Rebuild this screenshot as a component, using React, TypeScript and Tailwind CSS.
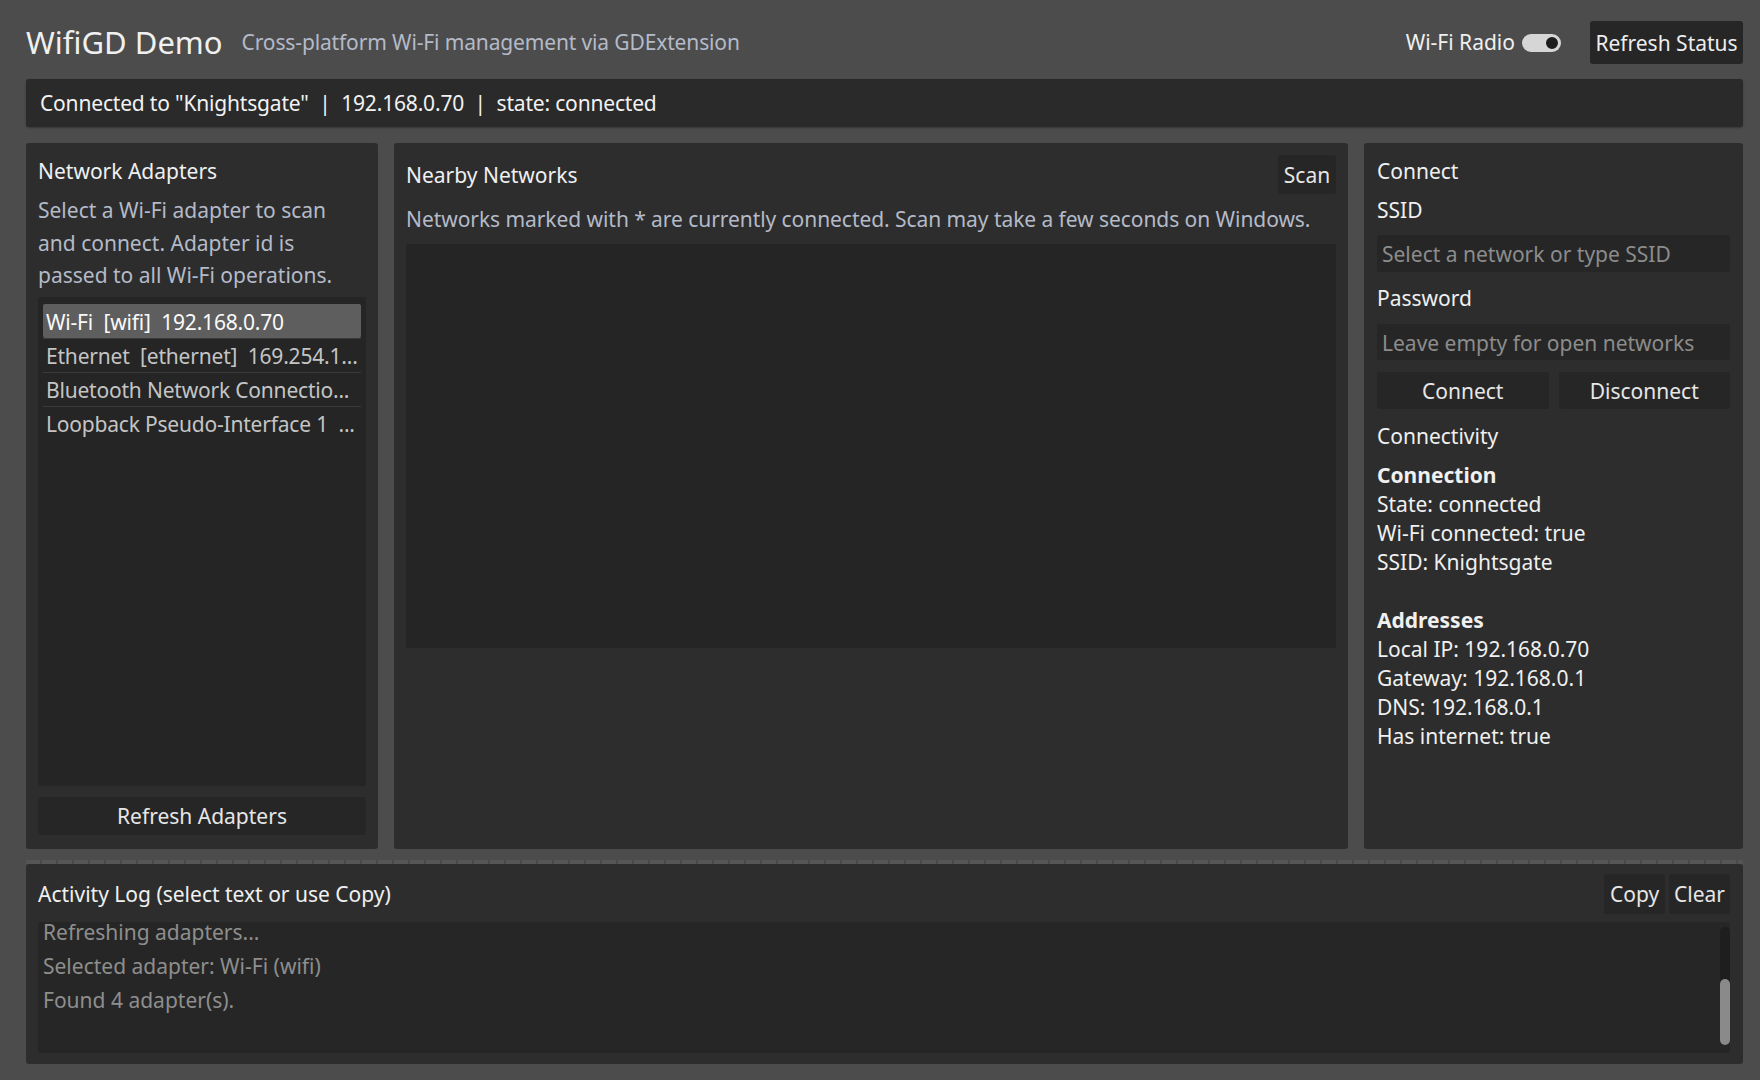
import clsx from "clsx";

const adapters = [
  "Wi-Fi  [wifi]  192.168.0.70",
  "Ethernet  [ethernet]  169.254.1...",
  "Bluetooth Network Connectio...",
  "Loopback Pseudo-Interface 1  ...",
];

const logLines = ["Refreshing adapters...", "Selected adapter: Wi-Fi (wifi)", "Found 4 adapter(s)."];

function Btn({ children, className }: { children: React.ReactNode; className?: string }) {
  return (
    <button
      className={clsx(
        "rounded-[3px] bg-[#262626] text-[#e6e6e6] text-[21px] leading-[29px] flex items-center justify-center pt-[1px]",
        className
      )}
    >
      {children}
    </button>
  );
}

function Panel({ children, className }: { children: React.ReactNode; className?: string }) {
  return <div className={clsx("rounded-[3px] bg-[#2d2d2d]", className)}>{children}</div>;
}

export default function App() {
  return (
    <div
      className="w-[1760px] h-[1080px] bg-[#4c4c4c] text-[#e8e8e8] text-[21px] leading-[29px] pl-[26px] pr-[17px] pt-[21px] flex flex-col overflow-hidden"
      style={{ fontFamily: '"Noto Sans", "Open Sans", sans-serif' }}
    >
      {/* header */}
      <div className="h-[43px] flex items-center">
        <h1 className="text-[31px] leading-[40px] text-[#f0f0f0] -mt-[2px]">WifiGD Demo</h1>
        <span className="ml-[19px] text-[#b4bac8] tracking-[-0.14px]">
          Cross-platform Wi-Fi management via GDExtension
        </span>
        <div className="ml-auto flex items-center">
          <span className="text-[#f0f0f0]">Wi-Fi Radio</span>
          <div className="ml-[7px] w-[39px] h-[18px] rounded-full bg-[#d6d6d6] relative">
            <div className="absolute right-[1px] top-[1px] w-[16px] h-[16px] rounded-full bg-[#1c1c1c] border-2 border-[#d6d6d6]" />
          </div>
          <Btn className="ml-[29px] w-[153px] h-[43px] bg-[#2e2e2e] text-[#ededed]">Refresh Status</Btn>
        </div>
      </div>

      {/* status bar */}
      <div className="mt-[14.5px] h-[48.5px] rounded-[3px] bg-[#2a2a2a] flex items-center px-[14px] pt-[2px] text-[#f2f2f2] tracking-[-0.18px] shadow-[0_1px_2px_rgba(0,0,0,0.3)]">
        Connected to "Knightsgate"&nbsp; |&nbsp; 192.168.0.70&nbsp; |&nbsp; state: connected
      </div>

      {/* main panels */}
      <div className="mt-[15.5px] h-[706px] flex gap-[16px]">
        {/* adapters */}
        <Panel className="w-[352px] flex flex-col px-[12px] pt-[14px] pb-[13.5px]">
          <div className="h-[29px] text-[#f0f0f0]">Network Adapters</div>
          <p className="mt-[8.5px] leading-[32.5px] text-[#b4bac8]">
            Select a Wi-Fi adapter to scan and connect. Adapter id is passed to all Wi-Fi operations.
          </p>
          <div className="mt-[5px] flex-1 rounded-[3px] bg-[#252525] px-[5px] pt-[7px]">
            {adapters.map((a, i) => (
              <div
                key={i}
                className={clsx(
                  "h-[34px] flex items-center px-[3px] pt-[3px] whitespace-pre overflow-hidden tracking-[-0.2px]",
                  i === 0
                    ? "bg-[#5e5e5e] rounded-[2px] text-[#fafafa]"
                    : "text-[#c4c4c4] border-t border-[#3a3a3a]"
                )}
              >
                {a}
              </div>
            ))}
          </div>
          <Btn className="mt-[11px] h-[38px] w-full">Refresh Adapters</Btn>
        </Panel>

        {/* networks */}
        <Panel className="w-[954px] flex flex-col px-[12px] pt-[12.5px]">
          <div className="flex items-center h-[39px]">
            <span className="text-[#f0f0f0] pt-[1px]">Nearby Networks</span>
            <Btn className="ml-auto w-[58px] h-[39px]">Scan</Btn>
          </div>
          <div className="mt-[11px] h-[29px] text-[#b4bac8] tracking-[-0.06px]">
            Networks marked with * are currently connected. Scan may take a few seconds on Windows.
          </div>
          <div className="mt-[9.5px] h-[404px] rounded-[3px] bg-[#252525]" />
        </Panel>

        {/* connect */}
        <Panel className="flex-1 flex flex-col px-[13px] pt-[14.3px]">
          <div className="h-[29px] text-[#f0f0f0]">Connect</div>
          <div className="mt-[10.4px] h-[29px] text-[#f0f0f0]">SSID</div>
          <div className="mt-[9.4px] h-[37px] rounded-[3px] bg-[#262626] flex items-center px-[5px] pt-[3px] text-[#8c8c8c]">
            Select a network or type SSID
          </div>
          <div className="mt-[12px] h-[29px] text-[#f0f0f0]">Password</div>
          <div className="mt-[11.3px] h-[36px] rounded-[3px] bg-[#262626] flex items-center px-[5px] pt-[3px] text-[#8c8c8c]">
            Leave empty for open networks
          </div>
          <div className="mt-[12.6px] flex gap-[10px]">
            <Btn className="flex-1 h-[37px]">Connect</Btn>
            <Btn className="flex-1 h-[37px]">Disconnect</Btn>
          </div>
          <div className="mt-[13px] h-[29px] text-[#f0f0f0]">Connectivity</div>
          <div className="mt-[9.5px] text-[#f0f0f0]">
            <div className="font-bold">Connection</div>
            <div>State: connected</div>
            <div>Wi-Fi connected: true</div>
            <div>SSID: Knightsgate</div>
            <div className="h-[29px]" />
            <div className="font-bold">Addresses</div>
            <div>Local IP: 192.168.0.70</div>
            <div>Gateway: 192.168.0.1</div>
            <div>DNS: 192.168.0.1</div>
            <div>Has internet: true</div>
          </div>
        </Panel>
      </div>

      {/* log */}
      <div className="mt-[11.5px] h-[4px] bg-[repeating-linear-gradient(90deg,#555_0px,#555_14px,#4a4a4a_14px,#4a4a4a_16px)]" />
      <Panel className="h-[200px] flex flex-col px-[12px] pr-[13px] pt-[10px]">
        <div className="flex items-center h-[40px]">
          <span className="text-[#f0f0f0] pt-[1px]">Activity Log (select text or use Copy)</span>
          <div className="ml-auto flex gap-[4px]">
            <Btn className="w-[61px] h-[40px]">Copy</Btn>
            <Btn className="w-[61px] h-[40px]">Clear</Btn>
          </div>
        </div>
        <div className="mt-[7.5px] h-[131.5px] rounded-[3px] bg-[#262626] overflow-hidden flex">
          <div className="flex-1 px-[5px] pt-[1px] text-[#8e8e8e]">
            {logLines.map((l, i) => (
              <div key={i} className="h-[34px] leading-[18px]">
                {l}
              </div>
            ))}
          </div>
          <div className="w-[10px] mt-[5px] mb-[8px] rounded-full bg-[#1e1e1e] flex flex-col justify-end">
            <div className="h-[66px] rounded-full bg-[#8a8a8a]" />
          </div>
        </div>
      </Panel>
    </div>
  );
}
